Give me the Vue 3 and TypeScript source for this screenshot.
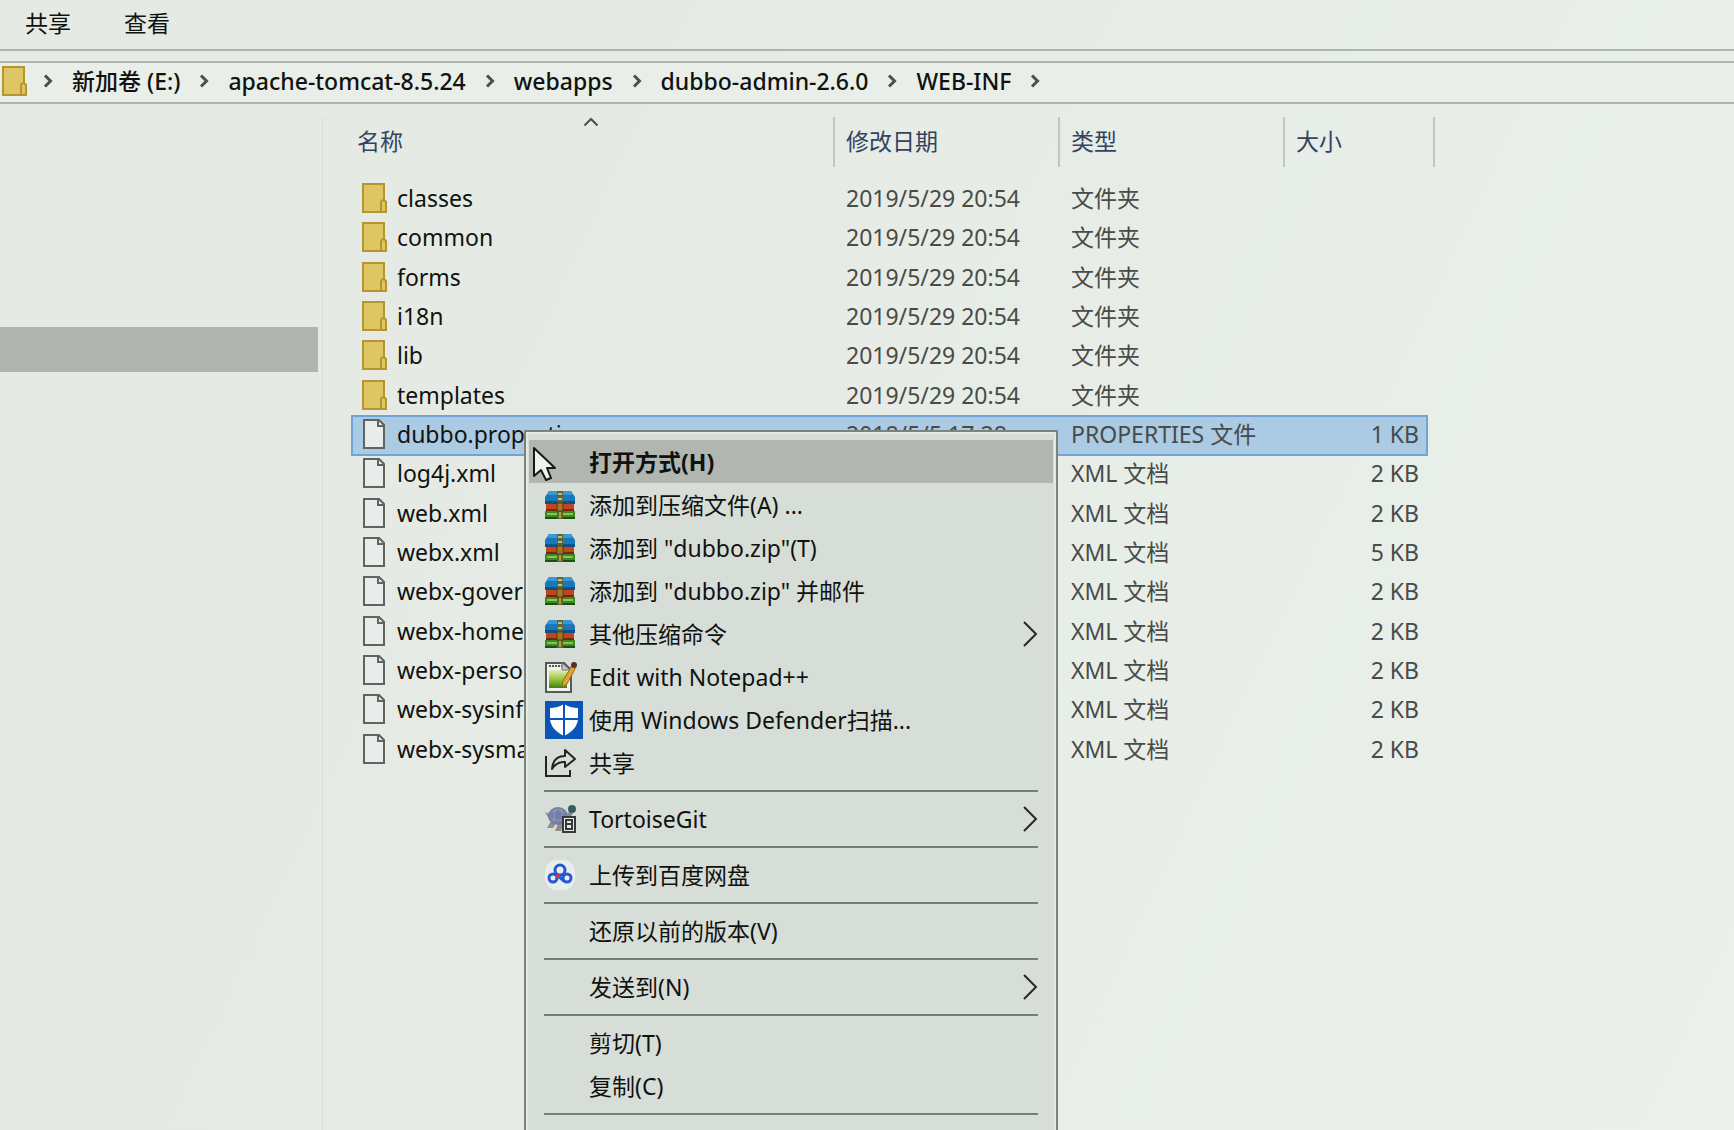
<script setup lang="ts">
interface Entry {
  name: string
  kind: 'folder' | 'file'
  date: string
  type: string
  size: string
  selected?: boolean
}

interface MenuItem {
  label: string
  icon?: 'archive' | 'notepad' | 'defender' | 'share' | 'tortoise' | 'baidu'
  submenu?: boolean
  active?: boolean
}

const tabs: string[] = ['共享', '查看']
const crumbs: string[] = ['新加卷 (E:)', 'apache-tomcat-8.5.24', 'webapps', 'dubbo-admin-2.6.0', 'WEB-INF']

const folder = (name: string): Entry => ({ name, kind: 'folder', date: '2019/5/29 20:54', type: '文件夹', size: '' })
const xml = (name: string, size = '2 KB'): Entry => ({ name, kind: 'file', date: '2018/5/5 17:28', type: 'XML 文档', size })

const entries: Entry[] = [
  folder('classes'),
  folder('common'),
  folder('forms'),
  folder('i18n'),
  folder('lib'),
  folder('templates'),
  { name: 'dubbo.properties', kind: 'file', date: '2018/5/5 17:28', type: 'PROPERTIES 文件', size: '1 KB', selected: true },
  xml('log4j.xml'),
  xml('web.xml'),
  xml('webx.xml', '5 KB'),
  xml('webx-governance.xml'),
  xml('webx-home.xml'),
  xml('webx-personal.xml'),
  xml('webx-sysinfo.xml'),
  xml('webx-sysmanage.xml'),
]

const groups: MenuItem[][] = [
  [
    { label: '打开方式(H)', active: true },
    { label: '添加到压缩文件(A) ...', icon: 'archive' },
    { label: '添加到 "dubbo.zip"(T)', icon: 'archive' },
    { label: '添加到 "dubbo.zip" 并邮件', icon: 'archive' },
    { label: '其他压缩命令', icon: 'archive', submenu: true },
    { label: 'Edit with Notepad++', icon: 'notepad' },
    { label: '使用 Windows Defender扫描...', icon: 'defender' },
    { label: '共享', icon: 'share' },
  ],
  [{ label: 'TortoiseGit', icon: 'tortoise', submenu: true }],
  [{ label: '上传到百度网盘', icon: 'baidu' }],
  [{ label: '还原以前的版本(V)' }],
  [{ label: '发送到(N)', submenu: true }],
  [{ label: '剪切(T)' }, { label: '复制(C)' }],
  [{ label: '创建快捷方式(S)' }],
]
</script>

<template>
  <div class="window">
    <nav class="tabs">
      <button v-for="t in tabs" :key="t" type="button" class="tab">{{ t }}</button>
    </nav>

    <nav class="address">
      <svg class="folder" viewBox="0 0 25 30" aria-hidden="true">
        <path d="M1 1H22V17L24 19V29H1Z" fill="#dfc665" stroke="#b4952e" stroke-width="2" />
        <path d="M19 29V20Q19 17 22 17V2" fill="none" stroke="#b4952e" stroke-width="2" />
      </svg>
      <template v-for="c in crumbs" :key="c">
        <svg class="chevron" viewBox="0 0 10 14" aria-hidden="true"><path d="M2 1.500L7.500 7L2 12.500" /></svg>
        <a href="#" class="crumb">{{ c }}</a>
      </template>
      <svg class="chevron" viewBox="0 0 10 14" aria-hidden="true"><path d="M2 1.500L7.500 7L2 12.500" /></svg>
    </nav>

    <div class="body">
      <aside class="tree"><div class="tree-current"></div></aside>
      <main class="files">
        <table>
          <colgroup>
            <col class="c-name" /><col class="c-date" /><col class="c-type" /><col class="c-size" />
          </colgroup>
          <thead>
            <tr>
              <th class="name-head">
                名称
                <svg class="sort" viewBox="0 0 16 10" aria-hidden="true"><path d="M1.500 8.500L8 2L14.500 8.500" /></svg>
              </th>
              <th>修改日期</th>
              <th>类型</th>
              <th class="last">大小</th>
            </tr>
          </thead>
          <tbody>
            <tr v-for="e in entries" :key="e.name" :class="{ selected: e.selected }">
              <td class="name">
                <div class="name-cell">
                  <svg v-if="e.kind === 'folder'" class="icon" viewBox="0 0 25 30" aria-hidden="true">
                    <path d="M1 1H22V17L24 19V29H1Z" fill="#dfc665" stroke="#b4952e" stroke-width="2" />
                    <path d="M19 29V20Q19 17 22 17V2" fill="none" stroke="#b4952e" stroke-width="2" />
                  </svg>
                  <svg v-else class="icon" viewBox="0 0 25 30" aria-hidden="true">
                    <path d="M2 1H17L22 6V29H2Z" fill="#e9ecea" stroke="#60645f" stroke-width="2" />
                    <path d="M16 1V7H22" fill="none" stroke="#60645f" stroke-width="2" />
                  </svg>
                  <span>{{ e.name }}</span>
                </div>
              </td>
              <td>{{ e.date }}</td>
              <td>{{ e.type }}</td>
              <td class="size">{{ e.size }}</td>
            </tr>
          </tbody>
        </table>
      </main>
    </div>

    <div class="menu" role="menu">
      <div v-for="(g, i) in groups" :key="i" class="group">
        <button v-for="m in g" :key="m.label" type="button" role="menuitem" class="item" :class="{ active: m.active }">
          <span class="slot">
            <svg v-if="m.icon === 'archive'" width="30" height="30" viewBox="0 0 30 30">
              <path d="M4 1H26L30 7V14H0V7Z" fill="#1878b8" />
              <path d="M4 1H26L28 5H2Z" fill="#3a97d0" />
              <path d="M0 11H30V14H0Z" fill="#0d4f86" />
              <path d="M1 14H29V21H1Z" fill="#c0471c" />
              <path d="M1 19H29V21H1Z" fill="#74280f" />
              <path d="M0 21H30V29H0Z" fill="#3d8a22" />
              <path d="M2 23H28V25H2Z" fill="#85c552" />
              <path d="M0 27H30V29H0Z" fill="#1d4f12" />
              <path d="M12 1H18V29H12Z" fill="#5f6431" />
              <path d="M13 3H17V5H13ZM13 8H17V10H13Z" fill="#a9c4a0" />
              <rect x="12" y="13" width="6" height="8" fill="#a87824" stroke="#4e3a14" />
              <path d="M14 22H16V28H14Z" fill="#b3a238" />
            </svg>
            <svg v-else-if="m.icon === 'notepad'" width="32" height="32" viewBox="0 0 32 32">
              <defs>
                <linearGradient id="pad" x1="0" y1="0" x2="0" y2="1">
                  <stop offset="0" stop-color="#e3ecc0" /><stop offset="0.500" stop-color="#9fc441" /><stop offset="1" stop-color="#3f8512" />
                </linearGradient>
              </defs>
              <path d="M1 2H19L26 9V31H1Z" fill="#f1f3ee" stroke="#565a55" stroke-width="2" />
              <path d="M4 9H22V27H4Z" fill="url(#pad)" />
              <path d="M4 5H18" stroke="#555" stroke-width="2" stroke-dasharray="2 1" />
              <path d="M17 2V9H25Z" fill="#c3cbd0" stroke="#6c7478" />
              <path d="M27 4L31 6L22 23L17 26L18 20Z" fill="#e0a52c" stroke="#8f6a20" />
              <circle cx="29" cy="4" r="3" fill="#5a2d2d" />
            </svg>
            <svg v-else-if="m.icon === 'defender'" width="38" height="38" viewBox="0 0 38 38">
              <path d="M0 0H38V38H0Z" fill="#0a55b8" />
              <path d="M19 3Q25 7 33 7V17Q33 28 19 35Q5 28 5 17V7Q13 7 19 3Z" fill="#fff" />
              <path d="M19 3V35M4 18H34" stroke="#0a55b8" stroke-width="2" />
            </svg>
            <svg v-else-if="m.icon === 'share'" width="32" height="30" viewBox="0 0 32 30" fill="none" stroke="#232523" stroke-width="2">
              <path d="M1 8V28H25V22" />
              <path d="M7 21Q8 8 20 8V2L30 11L20 19V14Q12 13 7 21Z" stroke-linejoin="round" />
            </svg>
            <svg v-else-if="m.icon === 'tortoise'" width="31" height="28" viewBox="0 0 31 28">
              <path d="M0 7L7 10L4 14Z" fill="#8b919b" />
              <path d="M6 16L2 23H8L11 18ZM13 19L10 26H16L19 19Z" fill="#8e9088" />
              <ellipse cx="13" cy="11" rx="10" ry="9" fill="#747fa8" />
              <path d="M6 8Q13 1 20 8M6 13Q13 18 21 13M10 4L9 17M16 4L18 16" fill="none" stroke="#939dc2" stroke-width="1" />
              <path d="M21 10L25 6L28 9L24 13Z" fill="#858c94" />
              <circle cx="27" cy="4" r="4" fill="#31615f" />
              <path d="M18 12H30V27H18Z" fill="#e8eae7" stroke="#373a38" stroke-width="2" />
              <path d="M21 15H27V24H21ZM21 19H27" fill="none" stroke="#373a38" stroke-width="2" />
            </svg>
            <svg v-else-if="m.icon === 'baidu'" width="30" height="30" viewBox="0 0 30 30">
              <rect width="30" height="30" rx="12" fill="#e8edee" />
              <g fill="none" stroke="#2459cf" stroke-width="3">
                <circle cx="15" cy="10" r="5" /><circle cx="8" cy="18" r="4" /><circle cx="22" cy="18" r="4" />
                <path d="M12 15L19 21" />
              </g>
              <circle cx="13" cy="16" r="2" fill="#e2342c" />
            </svg>
          </span>
          <span class="label">{{ m.label }}</span>
          <svg v-if="m.submenu" class="more" viewBox="0 0 16 26" aria-hidden="true"><path d="M2 1L14 13L2 25" /></svg>
        </button>
      </div>
    </div>

    <svg class="cursor" viewBox="0 0 24 36" aria-hidden="true">
      <path d="M2 2V30L9 24L14 34L19 32L15 22H23Z" fill="#eff3ef" stroke="#171917" stroke-width="2" stroke-linejoin="round" />
    </svg>
  </div>
</template>

<style>
body {
  margin: 0;
  background: #e7ede7;
}
</style>

<style scoped>
.window {
  position: relative;
  display: flex;
  flex-direction: column;
  height: 100vh;
  overflow: hidden;
  background: linear-gradient(115deg, #e5ebe4 30%, #ebf0eb);
  color: #101210;
  font: 23px/32px 'Noto Sans', 'Noto Sans CJK SC', sans-serif;
}

button {
  padding: 0;
  border: 0;
  background: none;
  color: inherit;
  font: inherit;
}

.tabs {
  display: flex;
  flex: none;
  gap: 53px;
  box-sizing: border-box;
  height: 51px;
  padding: 0 25px 3px;
  border-bottom: 2px solid #aeb5ae;
}

.address {
  display: flex;
  flex: none;
  align-items: center;
  gap: 19px;
  box-sizing: border-box;
  height: 43px;
  margin-top: 10px;
  padding: 0 0 4px 2px;
  border: solid #aeb5ae;
  border-width: 2px 0;
  background: #e9eee8;
  font-weight: 500;
}

.folder {
  width: 25px;
  height: 30px;
  margin-right: -3px;
}

.chevron {
  width: 10px;
  height: 14px;
  fill: none;
  stroke: #4c504c;
  stroke-width: 3;
}

.crumb {
  color: inherit;
  text-decoration: none;
  white-space: nowrap;
}

.body {
  display: flex;
  flex: 1;
  min-height: 0;
  padding-top: 13px;
}

.tree {
  flex: none;
  box-sizing: border-box;
  width: 323px;
  padding: 210px 4px 0 0;
  border-right: 1px solid #d6dcd6;
}

.tree-current {
  height: 45px;
  background: #afb4ae;
}

.files {
  flex: 1;
  padding-left: 29px;
}

table {
  width: 1075px;
  height: 653px;
  table-layout: fixed;
  border-collapse: separate;
  border-spacing: 0;
}

.c-name {
  width: 482px;
}

.c-date,
.c-type {
  width: 225px;
}

thead tr {
  height: 63px;
}

th {
  position: relative;
  box-sizing: border-box;
  padding: 0 0 15px 12px;
  color: #33445f;
  font-weight: 400;
  text-align: left;
}

th.name-head {
  padding-left: 5px;
}

th::after {
  content: '';
  position: absolute;
  top: 0;
  right: -1px;
  width: 2px;
  height: 50px;
  background: #c0c6c0;
}

th.last::after {
  right: -8px;
}

.sort {
  position: absolute;
  top: 0;
  left: 231px;
  width: 16px;
  height: 10px;
  fill: none;
  stroke: #4c504c;
  stroke-width: 2;
}

td {
  padding: 0 0 3px 12px;
  color: #484b48;
  white-space: nowrap;
}

td.name {
  padding-left: 10px;
  color: #101210;
}

td.size {
  padding-right: 8px;
  text-align: right;
}

.name-cell {
  display: flex;
  align-items: center;
  gap: 10px;
}

.icon {
  width: 25px;
  height: 30px;
}

tr.selected {
  background: #abcae3;
  outline: 2px solid #72a3d2;
  outline-offset: -1px;
}

.menu {
  position: absolute;
  top: 430px;
  left: 524px;
  box-sizing: border-box;
  width: 534px;
  padding: 8px 3px;
  border: 2px solid #7c837d;
  background: #d7ddd7;
  box-shadow: inset 0 0 0 2px #e4e9e4;
}

.group + .group::before {
  content: '';
  display: block;
  height: 2px;
  margin: 6px 15px 5px;
  background: #767d76;
}

.item {
  display: flex;
  align-items: center;
  width: 100%;
  height: 43px;
  padding: 0 15px 0 16px;
  text-align: left;
  white-space: nowrap;
}

.item.active {
  background: #b1b6b0;
  font-weight: 700;
}

.slot {
  display: flex;
  width: 44px;
}

.slot svg {
  flex: none;
}

.label {
  flex: 1;
}

.more {
  width: 16px;
  height: 26px;
  fill: none;
  stroke: #262826;
  stroke-width: 2;
}

.cursor {
  position: absolute;
  top: 446px;
  left: 532px;
  width: 24px;
  height: 36px;
}
</style>
